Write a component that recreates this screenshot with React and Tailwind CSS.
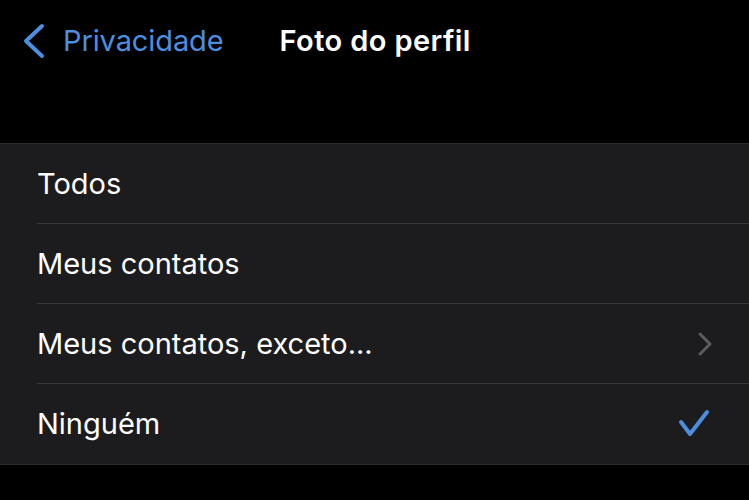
const options = [
    { label: 'Todos' },
    { label: 'Meus contatos' },
    { label: 'Meus contatos, exceto...', chevron: true },
    { label: 'Ninguém', selected: true },
];

const App = () => {
    return (
        <div className="w-[749px] h-[500px] bg-black overflow-hidden" style={{ fontFamily: 'Inter, "Noto Sans", sans-serif' }}>
            {/* Nav bar */}
            <div className="h-[82px] flex items-center">
                <div className="flex items-center pl-[20px] text-[#4c8fe0]">
                    <svg width="28" height="40" viewBox="0 0 28 40">
                        <polyline points="22,5 6,20 22,35" fill="none" stroke="currentColor" strokeWidth="4" strokeLinecap="round" strokeLinejoin="round" />
                    </svg>
                    <span className="ml-[15px] text-[29px] tracking-[-0.1px]">Privacidade</span>
                </div>
                <span className="ml-[56px] text-[29px] font-semibold text-white tracking-[0.4px]">Foto do perfil</span>
            </div>
            <div className="h-[61px]" />

            {/* Options list */}
            <div className="bg-[#1c1c1e] border-t border-b border-[#2c2c2e]">
                {options.map((opt, idx) => (
                    <div key={opt.label} className="pl-[37px]">
                        <div className={`h-[80px] flex items-center pr-[36px] ${idx < options.length - 1 ? 'border-b border-[#38383a]' : ''}`}>
                            <span className="flex-1 text-[29px] text-white tracking-[0px]">{opt.label}</span>
                            {opt.chevron && (
                                <svg width="16" height="26" viewBox="0 0 16 26" className="text-[#5c5c60]">
                                    <polyline points="3,3 13,13 3,23" fill="none" stroke="currentColor" strokeWidth="3" strokeLinecap="round" strokeLinejoin="round" />
                                </svg>
                            )}
                            {opt.selected && (
                                <svg width="34" height="32" viewBox="0 0 34 32" className="text-[#4c8fe0] mr-[2px]">
                                    <polyline points="4,14 13,26 30,4" fill="none" stroke="currentColor" strokeWidth="4" strokeLinecap="round" strokeLinejoin="round" />
                                </svg>
                            )}
                        </div>
                    </div>
                ))}
            </div>
        </div>
    );
};

export default App;
